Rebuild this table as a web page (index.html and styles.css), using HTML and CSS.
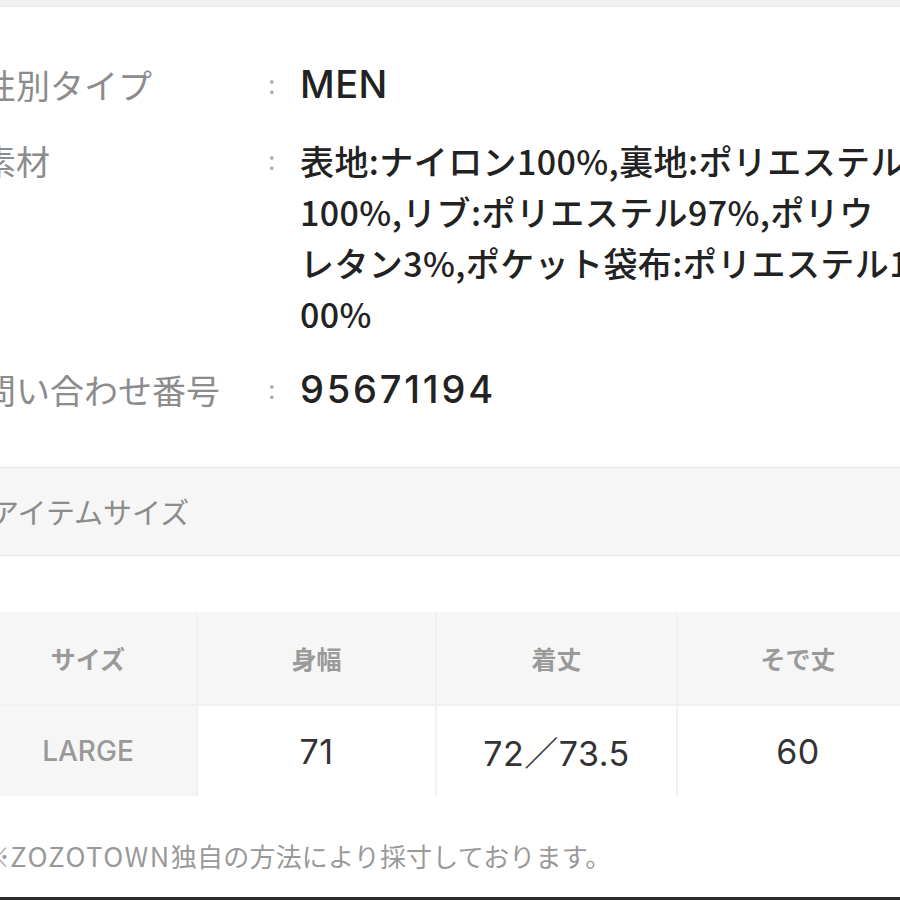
FILE: index.html
```html
<!DOCTYPE html>
<html lang="ja">
<head>
	<meta charset="UTF-8">
	<meta name="viewport" content="width=device-width, initial-scale=1.0">
	<title>アイテム詳細</title>
	<link rel="stylesheet" href="styles.css">
</head>
<body>
<div class="topbar"></div>

<!-- 商品情報 -->
<dl class="spec">
	<div class="spec-row">
		<dt class="spec-label">性別タイプ</dt>
		<dd class="spec-colon">:</dd>
		<dd class="spec-value latin">MEN</dd>
	</div>
	<div class="spec-row">
		<dt class="spec-label">素材</dt>
		<dd class="spec-colon">:</dd>
		<dd class="spec-value lines">
			<span>表地:ナイロン100%,裏地:ポリエステル</span>
			<span>100%,リブ:ポリエステル97%,ポリウ</span>
			<span>レタン3%,ポケット袋布:ポリエステル1</span>
			<span>00%</span>
		</dd>
	</div>
	<div class="spec-row">
		<dt class="spec-label">問い合わせ番号</dt>
		<dd class="spec-colon">:</dd>
		<dd class="spec-value latin number">95671194</dd>
	</div>
</dl>

<!-- サイズ -->
<h2 class="section-title">アイテムサイズ</h2>

<div class="size-table">
	<div class="cell head">サイズ</div>
	<div class="cell head">身幅</div>
	<div class="cell head">着丈</div>
	<div class="cell head">そで丈</div>
	<div class="cell size-name">LARGE</div>
	<div class="cell data">71</div>
	<div class="cell data">72／73.5</div>
	<div class="cell data">60</div>
</div>

<p class="note">※<span class="brand">ZOZOTOWN</span>独自の方法により採寸しております。</p>

<div class="bottom-edge"></div>
</body>
</html>
```

FILE: styles.css
```css
:root {
    --label: #8c8c8c;
    --text: #222222;
    --muted: #999999;
    --band: #f6f6f6;
    --line: #e6e6e6;
}

* {
    margin: 0;
    padding: 0;
    box-sizing: border-box;
}

html, body {
    width: 900px;
    height: 900px;
    overflow: hidden;
}

body {
    background: #fff;
    color: var(--text);
    font-family: Inter, "Noto Sans CJK JP", sans-serif;
    display: flex;
    flex-direction: column;
}

.topbar {
    height: 7px;
    background: #f2f2f2;
    border-bottom: 1px solid #e8e8e8;
    flex-shrink: 0;
}

.spec {
    display: flex;
    flex-direction: column;
    gap: 25px;
    padding-top: 52px;
    margin-left: -18px;
}

.spec-row {
    display: grid;
    grid-template-columns: 282px 36px 1fr;
    font-size: 34px;
    line-height: 51px;
}

.spec-label {
    color: var(--label);
    font-family: "Noto Sans CJK JP", sans-serif;
    font-weight: 400;
    white-space: nowrap;
}

.spec-colon {
    color: #aaa;
    font-size: 26px;
    padding-left: 4px;
}

.spec-value {
    font-weight: 500;
    white-space: nowrap;
}

.spec-value.latin {
    font-size: 38px;
    letter-spacing: 0.5px;
}

.spec-value.number {
    letter-spacing: 2.8px;
}

.lines span {
    display: block;
    font-family: "Noto Sans CJK JP", sans-serif;
    letter-spacing: 0.4px;
}

.section-title {
    margin-top: 52px;
    height: 89px;
    background: var(--band);
    border-top: 1px solid var(--line);
    border-bottom: 1px solid var(--line);
    text-indent: -10px;
    font-family: "Noto Sans CJK JP", sans-serif;
    font-size: 29px;
    line-height: 86px;
    font-weight: 400;
    color: var(--label);
    flex-shrink: 0;
}

.size-table {
    display: grid;
    grid-template-columns: 216px 237px 239px 240px;
    grid-template-rows: 92px 90px;
    gap: 2px;
    margin-top: 56px;
    margin-left: -20px;
    background: #f0f0f0;
    flex-shrink: 0;
}

.cell {
    display: flex;
    align-items: center;
    justify-content: center;
}

.head {
    background: var(--band);
    color: #9a9a9a;
    font-family: "Noto Sans CJK JP", sans-serif;
    font-size: 25px;
    font-weight: 700;
}

.size-name {
    background: var(--band);
    color: var(--muted);
    font-size: 28px;
    font-weight: 500;
}

.data {
    background: #fff;
    color: #333;
    font-size: 34px;
    letter-spacing: 0.5px;
}

.note {
    margin-top: 45px;
    margin-left: -16px;
    font-family: "Noto Sans CJK JP", sans-serif;
    font-size: 26px;
    line-height: 30px;
    letter-spacing: 0.2px;
    color: var(--muted);
    white-space: nowrap;
}

.brand {
    font-size: 27px;
    letter-spacing: 1.5px;
}

.bottom-edge {
    margin-top: auto;
    height: 3px;
    background: #2b2b2b;
    flex-shrink: 0;
}
```
